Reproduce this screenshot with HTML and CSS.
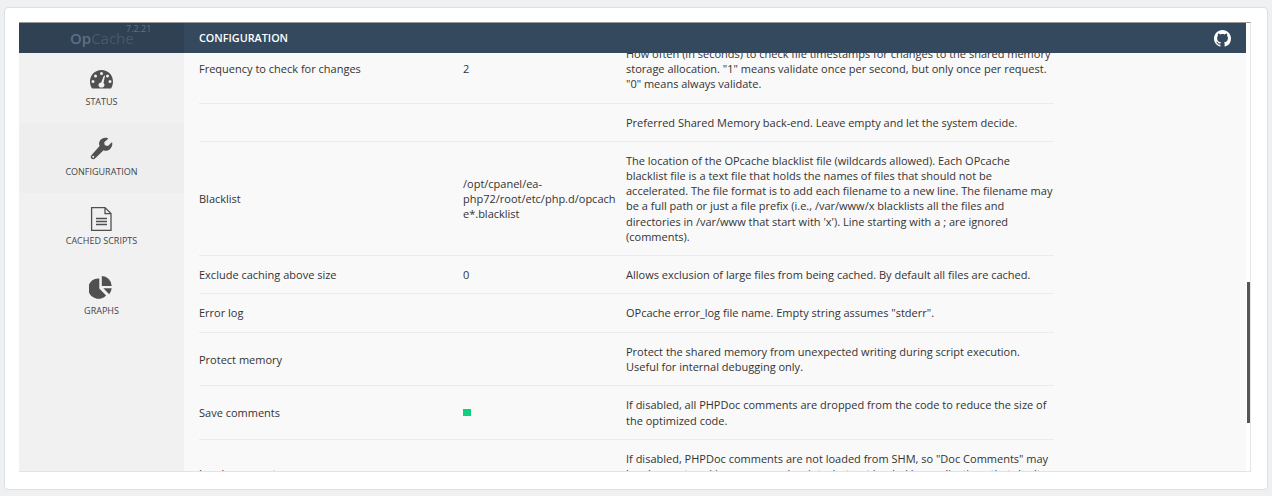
FILE: index.html
```html
<!DOCTYPE html>
<html lang="en">
<head>
<meta charset="utf-8">
<title>OpCache</title>
<link rel="stylesheet" href="styles.css">
</head>
<body>
<div class="card">
  <div class="frame">
    <header class="topbar">
      <div class="brand"><span class="logo"><b>Op</b>Cache</span><span class="version">7.2.21</span></div>
      <div class="title">CONFIGURATION</div>
      <svg class="github" viewBox="0 0 16 16" width="17" height="17"><path fill="#fff" d="M8 0C3.58 0 0 3.58 0 8c0 3.54 2.29 6.53 5.47 7.59.4.07.55-.17.55-.38 0-.19-.01-.82-.01-1.49-2.01.37-2.53-.49-2.69-.94-.09-.23-.48-.94-.82-1.13-.28-.15-.68-.52-.01-.53.63-.01 1.08.58 1.23.82.72 1.21 1.87.87 2.33.66.07-.52.28-.87.51-1.07-1.78-.2-3.64-.89-3.64-3.95 0-.87.31-1.59.82-2.15-.08-.2-.36-1.02.08-2.12 0 0 .67-.21 2.2.82.64-.18 1.32-.27 2-.27s1.36.09 2 .27c1.53-1.04 2.2-.82 2.2-.82.44 1.1.16 1.92.08 2.12.51.56.82 1.27.82 2.15 0 3.07-1.87 3.75-3.65 3.95.29.25.54.73.54 1.48 0 1.07-.01 1.93-.01 2.2 0 .21.15.46.55.38A8.01 8.01 0 0 0 16 8c0-4.42-3.58-8-8-8z"/></svg>
    </header>
    <div class="body">
      <nav class="side">
        <a class="item">
          <svg class="ico" viewBox="0 0 25 26" width="25" height="26"><path fill-rule="evenodd" fill="#505050" d="M12.500 4C6 4 1 9 1 15.500c0 2.400.6 4.600 1.700 6.400.2.300.5.600.9.600h17.800c.4 0 .7-.3.900-.6 1.100-1.800 1.700-4 1.700-6.400C24 9 19 4 12.500 4zM12.500 6a1.500 1.500 0 1 1 0 3 1.500 1.500 0 0 1 0-3zM6.500 8.500a1.500 1.500 0 1 1 0 3 1.500 1.500 0 0 1 0-3zM18.500 8.500a1.500 1.500 0 1 1 0 3 1.500 1.500 0 0 1 0-3zM4 14a1.500 1.500 0 1 1 0 3 1.500 1.500 0 0 1 0-3zM21 14a1.500 1.500 0 1 1 0 3 1.500 1.500 0 0 1 0-3zM15 9.500l1 .3-1.500 7.300c.7.500 1 1.200 1 2 0 1-.7 2-1.800 2.400h-2.500c-1-.4-1.700-1.400-1.700-2.400 0-1.400 1.200-2.600 2.700-2.600z"/></svg>
          <span>STATUS</span>
        </a>
        <a class="item active">
          <svg class="ico" viewBox="0 0 25 26" width="25" height="26"><path fill="#505050" d="M23.300 6.800c-.1-.4-.5-.4-.8-.2l-3.500 3.300-3.200-.6-.6-3L18.900 3c.3-.3.2-.6-.1-.8-3-.9-6-.1-7.600 2.100-1.200 1.700-1.500 3.900-.6 5.800L2.600 18.900c-1.100 1.100-1.100 2.600-.2 3.600 1 1 2.600 1 3.600 0l8.600-8.300c2 .9 4.300.6 6-.7 1.900-1.500 3-4.300 2.700-6.700z"/><circle cx="4.200" cy="20.800" r="1" fill="#eee"/></svg>
          <span>CONFIGURATION</span>
        </a>
        <a class="item">
          <svg class="ico" viewBox="0 0 25 26" width="25" height="26"><path fill="none" stroke="#505050" stroke-width="1.300" d="M2.600 1.600h13.400l6 6v16.800H2.600zM16 1.600v6h6"/><path fill="none" stroke="#505050" stroke-width="1.500" d="M7 12.500h11M7 15.500h11M7 18.500h11"/></svg>
          <span>CACHED SCRIPTS</span>
        </a>
        <a class="item">
          <svg class="ico" viewBox="0 0 25 26" width="25" height="26"><path fill="#505050" d="M10.300 3.500v10l6.800 6.900A10.200 10.200 0 1 1 10.300 3.500zM12.800 1a10.300 10.300 0 0 1 9.900 10h-9.900zM14.300 13.300h8.400a10.300 10.300 0 0 1-2.500 5.900z"/></svg>
          <span>GRAPHS</span>
        </a>
      </nav>
      <main class="content">
        <table class="conf">
          <tbody>
            <tr><td class="name">Frequency to check for changes</td><td class="value">2</td><td class="desc">How often (in seconds) to check file timestamps for changes to the shared memory storage allocation. "1" means validate once per second, but only once per request. "0" means always validate.</td></tr>
            <tr><td class="name"></td><td class="value"></td><td class="desc">Preferred Shared Memory back-end. Leave empty and let the system decide.</td></tr>
            <tr><td class="name">Blacklist</td><td class="value">/opt/cpanel/ea-php72/root/etc/php.d/opcache*.blacklist</td><td class="desc">The location of the OPcache blacklist file (wildcards allowed). Each OPcache blacklist file is a text file that holds the names of files that should not be accelerated. The file format is to add each filename to a new line. The filename may be a full path or just a file prefix (i.e., /var/www/x blacklists all the files and directories in /var/www that start with 'x'). Line starting with a ; are ignored (comments).</td></tr>
            <tr><td class="name">Exclude caching above size</td><td class="value">0</td><td class="desc">Allows exclusion of large files from being cached. By default all files are cached.</td></tr>
            <tr class="log"><td class="name">Error log</td><td class="value"></td><td class="desc">OPcache error_log file name. Empty string assumes "stderr".</td></tr>
            <tr><td class="name">Protect memory</td><td class="value"></td><td class="desc">Protect the shared memory from unexpected writing during script execution. Useful for internal debugging only.</td></tr>
            <tr><td class="name">Save comments</td><td class="value"><i class="on"></i></td><td class="desc">If disabled, all PHPDoc comments are dropped from the code to reduce the size of the optimized code.</td></tr>
            <tr><td class="name">Load comments</td><td class="value"></td><td class="desc">If disabled, PHPDoc comments are not loaded from SHM, so "Doc Comments" may be always stored in compressed scripts, but not loaded by applications that don't need them. Loading them on demand can reduce the memory used by each script.</td></tr>
          </tbody>
        </table>
      </main>
      <div class="scrollbar"><div class="thumb"></div></div>
    </div>
  </div>
</div>
</body>
</html>
```

FILE: styles.css
```css
* { box-sizing: border-box; }
html, body { height: 100%; }
body {
  margin: 0;
  padding: 7px 4px 6px 4px;
  background: #eef0f2;
  font-family: "Open Sans", sans-serif;
  font-size: 11px;
  line-height: 15.2px;
  color: #333;
  overflow: hidden;
}
.card {
  height: 483px;
  background: #fff;
  border: 1px solid #dcdfe3;
  border-radius: 4px;
  padding: 14px 16px 18px 14px;
}
.frame {
  height: 450px;
  background: #fff;
  border-top: 1px solid #999;
  border-right: 1px solid #e4e4e4;
  border-bottom: 1px solid #e4e4e4;
  display: flex;
  flex-direction: column;
  overflow: hidden;
}
.topbar {
  flex: none;
  height: 30px;
  margin-right: 4px;
  display: flex;
  align-items: center;
  background: #34495e;
  color: #fff;
}
.brand {
  flex: none;
  width: 165px;
  height: 100%;
  background: #2f4153;
  position: relative;
  padding: 3px 0 0 51px;
  line-height: 24px;
}
.logo {
  font-size: 15px;
  color: #47596c;
}
.logo b { font-weight: 600; color: #5b7084; }
.version {
  position: absolute;
  left: 107px;
  top: 0;
  font-size: 9px;
  color: #5f7386;
  line-height: 12px;
}
.title {
  flex: 1;
  padding-left: 15px;
  font-weight: 600;
  font-size: 10.8px;
}
.github { margin-right: 15px; }
.body {
  flex: 1;
  min-height: 0;
  display: flex;
}
.side {
  flex: none;
  width: 165px;
  background: #f1f1f1;
  padding-top: .2px;
}
.item {
  height: 69.67px;
  display: flex;
  flex-direction: column;
  align-items: center;
  padding-top: 13px;
  gap: 3.7px;
  font-size: 9px;
  line-height: 12px;
  color: #444;
}
.item.active { background: #eeeeee; }
.ico { display: block; flex: none; }
.content {
  flex: 1;
  min-width: 0;
  overflow: hidden;
  background: #f9f9f9;
  padding: 0 192px 0 15px;
}
.conf {
  width: 855px;
  margin-top: -18px;
  border-collapse: collapse;
  table-layout: fixed;
}
.conf td {
  padding: 11px 10px 11px 0;
  vertical-align: middle;
  border-bottom: 1px solid #ececec;
  overflow-wrap: anywhere;
}
.conf td.desc { padding-right: 0; }
.conf .log td { padding-bottom: 11.6px; }
.conf .name { width: 264px; }
.conf .value { width: 163px; }
.on {
  display: block;
  width: 8px;
  height: 7px;
  background: #10d07f;
}
.scrollbar {
  flex: none;
  width: 4px;
  position: relative;
  background: #fff;
}
.thumb {
  position: absolute;
  left: 1px;
  top: 229px;
  width: 3px;
  height: 141px;
  background: #555;
}
```
